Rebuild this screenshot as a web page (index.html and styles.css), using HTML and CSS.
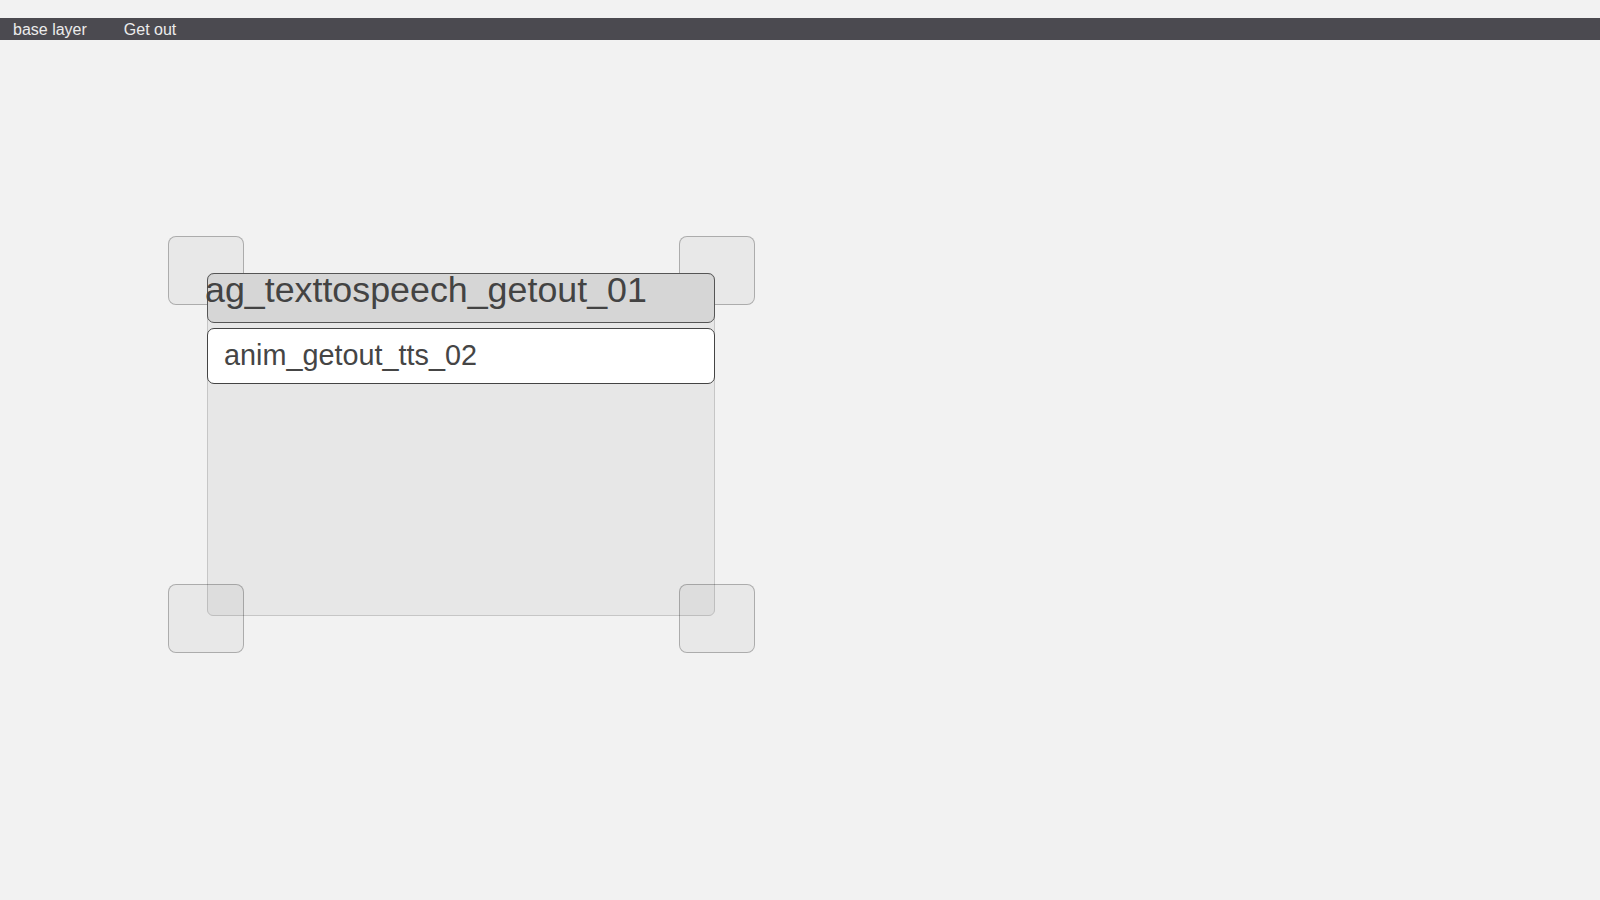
FILE: index.html
```html
<!DOCTYPE html>
<html>
<head>
<meta charset="utf-8">
<link rel="stylesheet" href="styles.css">
</head>
<body>
<div class="bar">
  <span class="bar-item">base layer</span>
  <span class="bar-item">Get out</span>
</div>
<div class="canvas">
  <div class="node">
    <div class="handle tl"></div>
    <div class="handle tr"></div>
    <div class="handle bl"></div>
    <div class="handle br"></div>
    <div class="title">ag_texttospeech_getout_01</div>
    <div class="item">anim_getout_tts_02</div>
  </div>
</div>
</body>
</html>
```

FILE: styles.css
```css
html, body {
  margin: 0;
  padding: 0;
  background: #f2f2f2;
  font-family: "Liberation Sans", Arial, sans-serif;
}
body {
  width: 1600px;
  height: 900px;
  overflow: hidden;
}
.bar {
  margin-top: 18px;
  height: 22px;
  background: #4b4a50;
  display: flex;
  align-items: center;
  gap: 37px;
  padding-left: 13px;
}
.bar-item {
  color: #ececec;
  font-size: 16px;
  line-height: 22px;
  padding-top: 2px;
}
.canvas {
  padding-left: 207px;
  padding-top: 233px;
}
.node {
  position: relative;
  width: 508px;
  height: 343px;
  box-sizing: border-box;
  background: #e7e7e7;
  border: 1px solid #c6c6c6;
  border-radius: 6px;
  display: flex;
  flex-direction: column;
  gap: 5px;
}
.handle {
  position: absolute;
  width: 76px;
  height: 69px;
  box-sizing: border-box;
  background: rgba(0, 0, 0, 0.04);
  border: 1px solid rgba(0, 0, 0, 0.26);
  border-radius: 8px;
}
.handle.tl { left: -40px; top: -38px; }
.handle.tr { left: 471px; top: -38px; }
.handle.bl { left: -40px; top: 310px; }
.handle.br { left: 471px; top: 310px; }
.title {
  position: relative;
  margin: -1px -1px 0;
  height: 50px;
  box-sizing: border-box;
  background: #d6d6d6;
  border: 1px solid #555;
  border-radius: 7px;
  font-size: 35.8px;
  line-height: 33px;
  color: #434343;
  white-space: nowrap;
  text-indent: -3px;
}
.item {
  position: relative;
  margin: 0 -1px;
  height: 56px;
  box-sizing: border-box;
  background: #ffffff;
  border: 1px solid #444;
  border-radius: 7px;
  font-size: 28.8px;
  line-height: 52px;
  padding-left: 16px;
  color: #454545;
}
```
